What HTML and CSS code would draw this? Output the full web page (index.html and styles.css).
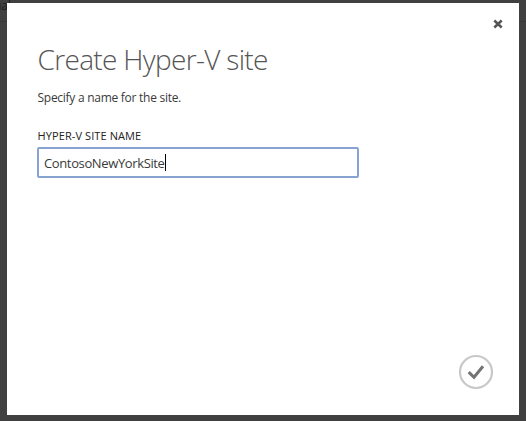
FILE: index.html
```html
<!DOCTYPE html>
<html lang="en">
<head>
<meta charset="utf-8">
<title>Create Hyper-V site</title>
<link rel="stylesheet" href="styles.css">
</head>
<body>
<div class="backdrop" aria-hidden="true">ual</div>
<main class="dialog">
  <button class="close" aria-label="Close">
    <svg width="10" height="10" viewBox="0 0 10 10"><path d="M1.3 1.5L8.7 8.5M8.7 1.5L1.3 8.5" fill="none" stroke="#555" stroke-width="2.5"/></svg>
  </button>
  <h1 class="title">Create Hyper-V site</h1>
  <p class="hint">Specify a name for the site.</p>
  <label class="label" for="site">HYPER-V SITE NAME</label>
  <div class="field" id="site"><span class="value">ContosoNewYorkSite</span><i class="caret"></i></div>
  <button class="submit" aria-label="Complete">
    <svg width="36" height="36" viewBox="0 0 36 36" fill="none"><circle cx="18" cy="18" r="16" stroke="#c8c8c8" stroke-width="2.2"/><path d="M10.7 18.2L16 23.3L25 12.3" stroke="#737373" stroke-width="3"/></svg>
  </button>
</main>
</body>
</html>
```
FILE: styles.css
```css
* { box-sizing: border-box; }
body {
  margin: 0;
  width: 526px;
  height: 421px;
  padding: 3px 7px 6px;
  overflow: hidden;
  background: #404040;
  font-family: "Open Sans", "Noto Sans", sans-serif;
}
.backdrop {
  position: absolute;
  left: -6px;
  top: -2px;
  z-index: -1;
  width: 532px;
  height: 24px;
  border-bottom: 1px solid #383838;
  color: #1c1c1c;
  font-size: 12px;
  line-height: 16px;
}
.dialog {
  display: flex;
  flex-direction: column;
  align-items: flex-start;
  width: 512px;
  height: 412px;
  padding: 16px 25px 25px 30px;
  background: #fff;
  color: #3a3a3a;
}
button {
  display: block;
  padding: 0;
  border: 0;
  background: none;
}
button svg { display: block; }
.close {
  align-self: flex-end;
  height: 10px;
  margin-right: -9px;
}
.title, .hint, .label { white-space: nowrap; }
.title {
  margin: 12px 0 0;
  padding-left: 0.5px;
  color: #555;
  font-size: 28px;
  font-weight: 300;
  line-height: 36px;
  letter-spacing: -0.67px;
}
.hint {
  margin: 12px 0 0;
  padding-left: 0.5px;
  font-size: 12px;
  line-height: 18px;
  letter-spacing: -0.27px;
}
.label {
  margin-top: 20px;
  padding-left: 0.5px;
  color: #222;
  font-size: 11px;
  line-height: 18px;
  letter-spacing: 0.1px;
}
.field {
  display: flex;
  align-items: center;
  width: 322px;
  height: 31px;
  margin-top: 2px;
  padding-left: 5px;
  border: 2px solid #86a3d2;
  border-radius: 2px;
  font-size: 13px;
}
.value { letter-spacing: -0.37px; }
.caret {
  width: 1px;
  height: 17px;
  background: #000;
}
.submit {
  align-self: flex-end;
  margin-top: auto;
}
```
